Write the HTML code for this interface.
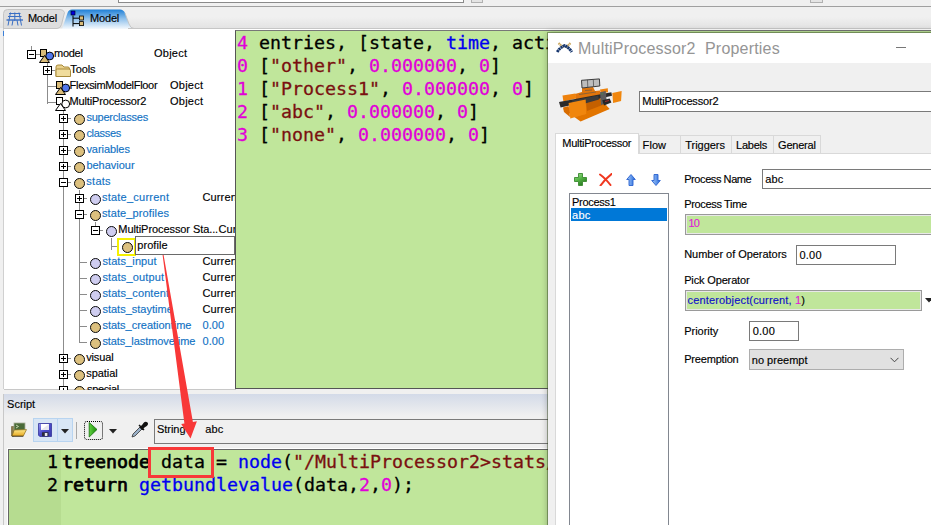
<!DOCTYPE html><html><head><meta charset="utf-8"><title>Model</title><style>
*{box-sizing:border-box;margin:0;padding:0}
html,body{width:931px;height:525px;overflow:hidden;background:#f0f0f0}
body{position:relative;font-family:"Liberation Sans",sans-serif;font-size:11px;color:#000}
.a{position:absolute}
.t{position:absolute;white-space:nowrap;line-height:16px;height:16px;font-size:11px;letter-spacing:-0.35px;-webkit-text-stroke:0.15px currentColor}
.bl{color:#1272c4}
.mono{font-family:"DejaVu Sans Mono","Liberation Mono",monospace;font-size:18.27px;line-height:23px;white-space:pre;position:absolute;-webkit-text-stroke:0.3px currentColor}
.mono b{font-weight:normal;-webkit-text-stroke:0.75px currentColor}
.mg{color:#e000d8}
.br{color:#7a1010}
.b2{color:#0000f0}
.box{position:absolute;width:9px;height:9px;border:1px solid #000;background:#fff}
.box i{position:absolute;left:1px;top:3px;width:5px;height:1px;background:#000}
.box b{position:absolute;left:3px;top:1px;width:1px;height:5px;background:#000}
.ct{position:absolute;width:11px;height:11px;border-radius:50%;border:1.4px solid #0a0a0a;background:#dcc07e}
.cl{position:absolute;width:11px;height:11px;border-radius:50%;border:1.4px solid #0a0a0a;background:#cfcdf0}
.ln{position:absolute;background:#8c8c8c}
.inp{position:absolute;background:#fff;border:1px solid #7a7a7a}
</style></head><body>
<div class="a" style="left:0;top:6px;width:931px;height:1px;background:#a0a0a0"></div>
<div class="a" style="left:118px;top:0;width:346px;height:3px;background:#fff;border:1px solid #8a8a8a;border-top:0"></div>
<div class="a" style="left:471px;top:0;width:12px;height:3px;background:#e4e4e4;border:1px solid #b0b0b0;border-top:0"></div>
<div class="a" style="left:810px;top:0;width:13px;height:3px;background:#e4e4e4;border:1px solid #b0b0b0;border-top:0"></div>
<div class="a" style="left:0;top:17px;width:931px;height:11px;background:linear-gradient(#f0f0f0,#e3e3e3)"></div>
<svg class="a" style="left:0;top:7px" width="140" height="23" viewBox="0 0 140 23">
<defs><linearGradient id="tg" x1="0" y1="0" x2="0" y2="1"><stop offset="0" stop-color="#1e7fd6"/><stop offset="0.45" stop-color="#8fc1ec"/><stop offset="1" stop-color="#ffffff"/></linearGradient></defs>
<path d="M3.5 22 V6.5 Q3.5 2.5 7.5 2.5 H60 Q63.5 2.5 64.5 5.5 L61.5 17.5 Q60.5 21.5 57 21.5 H3.5Z" fill="#dedede" stroke="#c4c4c4"/>
<path d="M62 22 L67.5 6 Q68.5 2.5 72 2.5 H120 Q123.5 2.5 125 6 L129 17 Q130.5 21.5 134 21.5 H140 V23 H62Z" fill="url(#tg)"/><path d="M125 6 L129 17 Q130.5 21.5 134 21.5 H140" fill="none" stroke="#c4c4c4" stroke-width="0.9"/>
<g stroke="#3a6fc4" stroke-width="1" fill="none"><path d="M9 6.5 H20.5 M8 9.5 H21.5 M10.5 5.5 L8 18.5 M14.8 5.5 V14 M19 5.5 L21.5 18.5 M13 13 L12 18.5 M17 13 L18 18.5"/><path d="M6.5 13 H23" stroke-width="1.4"/></g>
<g><rect x="71" y="4" width="4" height="4" fill="#0000e0" stroke="#000" stroke-width="0.6"/><path d="M73 8.5 V19.5 M73 11.2 H79 M73 16.6 H79" stroke="#000" stroke-width="1" fill="none"/><rect x="79.5" y="9" width="4" height="4" fill="#d9bb78" stroke="#000" stroke-width="0.8"/><rect x="79.5" y="14.6" width="4" height="4" fill="#d9bb78" stroke="#000" stroke-width="0.8"/></g>
</svg>
<div class="t " style="left:27.9px;top:10px;letter-spacing:-0.19px;">Model</div>
<div class="t " style="left:90.0px;top:10px;letter-spacing:-0.17px;">Model</div>
<div class="a" style="left:128px;top:28px;width:803px;height:1px;background:#c6c6c6"></div>
<div class="a" style="left:4px;top:29px;width:927px;height:2px;background:#fff"></div>
<div class="a" style="left:4px;top:29px;width:232px;height:361px;background:#fff;border-bottom:1px solid #c8c8c8"></div>
<div class="a" style="left:3px;top:29px;width:1px;height:360px;background:#d0d0d0"></div>
<div class="a" style="left:3px;top:31px;width:1px;height:5px;background:#3a7fd8"></div>
<div class="ln" style="left:31px;top:46px;width:1px;height:4px"></div>
<div class="ln" style="left:47px;top:62px;width:1px;height:42px"></div>
<div class="ln" style="left:52px;top:70px;width:3px;height:1px"></div>
<div class="ln" style="left:47px;top:86px;width:9px;height:1px"></div>
<div class="ln" style="left:47px;top:102px;width:9px;height:1px"></div>
<div class="ln" style="left:63px;top:110px;width:1px;height:280px"></div>
<div class="ln" style="left:68px;top:118px;width:3px;height:1px"></div>
<div class="ln" style="left:68px;top:134px;width:3px;height:1px"></div>
<div class="ln" style="left:68px;top:150px;width:3px;height:1px"></div>
<div class="ln" style="left:68px;top:166px;width:3px;height:1px"></div>
<div class="ln" style="left:68px;top:182px;width:3px;height:1px"></div>
<div class="ln" style="left:68px;top:358px;width:3px;height:1px"></div>
<div class="ln" style="left:68px;top:374px;width:3px;height:1px"></div>
<div class="ln" style="left:68px;top:390px;width:3px;height:1px"></div>
<div class="ln" style="left:79px;top:190px;width:1px;height:152px"></div>
<div class="ln" style="left:84px;top:198px;width:3px;height:1px"></div>
<div class="ln" style="left:84px;top:214px;width:3px;height:1px"></div>
<div class="ln" style="left:79px;top:262px;width:8px;height:1px"></div>
<div class="ln" style="left:79px;top:278px;width:8px;height:1px"></div>
<div class="ln" style="left:79px;top:294px;width:8px;height:1px"></div>
<div class="ln" style="left:79px;top:310px;width:8px;height:1px"></div>
<div class="ln" style="left:79px;top:326px;width:8px;height:1px"></div>
<div class="ln" style="left:79px;top:342px;width:8px;height:1px"></div>
<div class="ln" style="left:95px;top:222px;width:1px;height:4px"></div>
<div class="ln" style="left:100px;top:230px;width:3px;height:1px"></div>
<div class="ln" style="left:111px;top:238px;width:1px;height:12px"></div>
<div class="ln" style="left:111px;top:246px;width:6px;height:1px"></div>
<div class="box" style="left:27px;top:50px"><i></i></div>
<div class="ln" style="left:36px;top:54px;width:4px;height:1px"></div>
<svg class="a" style="left:39px;top:49px" width="16" height="15" viewBox="0 0 16 15"><rect x="1.5" y="0.5" width="6" height="7" fill="#d9bb78" stroke="#000"/><circle cx="10.7" cy="7" r="3.9" fill="#5278ea" stroke="#000"/><path d="M5.5 6.5 L10.5 13.5 H0.5Z" fill="#d9bb78" stroke="#000"/></svg>
<div class="t " style="left:54.1px;top:45px;letter-spacing:-0.29px;">model</div>
<div class="t " style="left:154.0px;top:45px;letter-spacing:0.25px;">Object</div>
<div class="box" style="left:43px;top:66px"><i></i><b></b></div>
<svg class="a" style="left:55px;top:64px" width="17" height="14" viewBox="0 0 17 14"><path d="M1 3 Q1 1 3 1 H7 L9 3 H13 Q14.5 3 14.5 5 V12.5 H1Z" fill="#e8cf8a" stroke="#a88a3a"/><path d="M1 12.5 V6 Q1 5 2.5 5 H14 Q15.5 5 15.5 6.5 V12.5Z" fill="#f0dc9c" stroke="#a88a3a"/></svg>
<div class="t " style="left:70.3px;top:61px;letter-spacing:-0.1px;">Tools</div>
<svg class="a" style="left:55px;top:81px" width="16" height="15" viewBox="0 0 16 15"><rect x="1.5" y="0.5" width="6" height="7" fill="#d9bb78" stroke="#000"/><circle cx="10.7" cy="7" r="3.9" fill="#5278ea" stroke="#000"/><path d="M5.5 6.5 L10.5 13.5 H0.5Z" fill="#d9bb78" stroke="#000"/></svg>
<div class="t " style="left:69.6px;top:77px;letter-spacing:-0.31px;">FlexsimModelFloor</div>
<div class="t " style="left:170.0px;top:77px;letter-spacing:0.25px;">Object</div>
<svg class="a" style="left:55px;top:97px" width="16" height="15" viewBox="0 0 16 15"><rect x="1.5" y="0.5" width="6" height="7" fill="#fff" stroke="#000"/><circle cx="10.7" cy="7" r="3.9" fill="#fff" stroke="#000"/><path d="M5.5 6.5 L10.5 13.5 H0.5Z" fill="#fff" stroke="#000"/></svg>
<div class="t " style="left:69.6px;top:93px;letter-spacing:-0.15px;">MultiProcessor2</div>
<div class="t " style="left:170.0px;top:93px;letter-spacing:0.25px;">Object</div>
<div class="box" style="left:59px;top:114px"><i></i><b></b></div>
<div class="ct" style="left:74px;top:114px"></div>
<div class="t bl" style="left:86.4px;top:109px;letter-spacing:-0.22px;">superclasses</div>
<div class="box" style="left:59px;top:130px"><i></i><b></b></div>
<div class="ct" style="left:74px;top:130px"></div>
<div class="t bl" style="left:86.4px;top:125px;letter-spacing:-0.31px;">classes</div>
<div class="box" style="left:59px;top:146px"><i></i><b></b></div>
<div class="ct" style="left:74px;top:146px"></div>
<div class="t bl" style="left:86.4px;top:141px;letter-spacing:-0.06px;">variables</div>
<div class="box" style="left:59px;top:162px"><i></i><b></b></div>
<div class="ct" style="left:74px;top:162px"></div>
<div class="t bl" style="left:86.4px;top:157px;letter-spacing:-0.02px;">behaviour</div>
<div class="box" style="left:59px;top:178px"><i></i></div>
<div class="ct" style="left:74px;top:178px"></div>
<div class="t bl" style="left:86.3px;top:173px;letter-spacing:0.27px;">stats</div>
<div class="box" style="left:75px;top:194px"><i></i><b></b></div>
<div class="cl" style="left:90px;top:194px"></div>
<div class="t bl" style="left:101.9px;top:189px;letter-spacing:0.24px;">state_current</div>
<div class="t " style="left:202.4px;top:189px;letter-spacing:0.16px;">Curren</div>
<div class="box" style="left:75px;top:210px"><i></i></div>
<div class="ct" style="left:90px;top:210px"></div>
<div class="t bl" style="left:101.9px;top:205px;letter-spacing:0.12px;">state_profiles</div>
<div class="box" style="left:91px;top:226px"><i></i></div>
<div class="cl" style="left:106px;top:226px"></div>
<div class="t " style="left:118.3px;top:221px;letter-spacing:-0.08px;">MultiProcessor Sta...</div>
<div class="t " style="left:218.4px;top:221px;letter-spacing:0.16px;">Curren</div>
<div class="a" style="left:117px;top:238px;width:19px;height:18px;border:2px solid #f4f000;background:#fff"></div>
<div class="ct" style="left:122px;top:242px"></div>
<div class="inp" style="left:135px;top:236px;width:100px;height:19px;border-color:#6a6a6a"></div>
<div class="t " style="left:137.2px;top:237px;letter-spacing:0.08px;">profile</div>
<div class="cl" style="left:90px;top:258px"></div>
<div class="t bl" style="left:102.4px;top:253px;letter-spacing:0.1px;">stats_input</div>
<div class="t " style="left:202.4px;top:253px;letter-spacing:0.16px;">Curren</div>
<div class="cl" style="left:90px;top:274px"></div>
<div class="t bl" style="left:102.4px;top:269px;letter-spacing:0.16px;">stats_output</div>
<div class="t " style="left:202.4px;top:269px;letter-spacing:0.16px;">Curren</div>
<div class="cl" style="left:90px;top:290px"></div>
<div class="t bl" style="left:102.4px;top:285px;letter-spacing:0.1px;">stats_content</div>
<div class="t " style="left:202.4px;top:285px;letter-spacing:0.16px;">Curren</div>
<div class="cl" style="left:90px;top:306px"></div>
<div class="t bl" style="left:102.4px;top:301px;letter-spacing:0.01px;">stats_staytime</div>
<div class="t " style="left:202.4px;top:301px;letter-spacing:0.16px;">Curren</div>
<div class="ct" style="left:90px;top:322px"></div>
<div class="t bl" style="left:102.4px;top:317px;letter-spacing:-0.01px;">stats_creationtime</div>
<div class="t bl" style="left:202.4px;top:317px;letter-spacing:0.12px;">0.00</div>
<div class="ct" style="left:90px;top:338px"></div>
<div class="t bl" style="left:102.4px;top:333px;letter-spacing:-0.07px;">stats_lastmovetime</div>
<div class="t bl" style="left:202.4px;top:333px;letter-spacing:0.12px;">0.00</div>
<div class="box" style="left:59px;top:354px"><i></i><b></b></div>
<div class="ct" style="left:74px;top:354px"></div>
<div class="t " style="left:86.2px;top:349px;letter-spacing:-0.14px;">visual</div>
<div class="box" style="left:59px;top:370px"><i></i><b></b></div>
<div class="ct" style="left:74px;top:370px"></div>
<div class="t " style="left:86.2px;top:365px;letter-spacing:-0.03px;">spatial</div>
<div class="box" style="left:59px;top:386px"><i></i><b></b></div>
<div class="ct" style="left:74px;top:386px"></div>
<div class="t " style="left:87px;top:381px">special</div>
<div class="a" style="left:0;top:390px;width:548px;height:135px;background:#f0f0f0"></div>
<div class="a" style="left:235px;top:30px;width:700px;height:359px;background:#c0e69b;border-left:1px solid #555;border-top:1px solid #777;border-bottom:1px solid #555"></div>
<div class="mono" style="left:237px;top:31px"><span class="mg">4</span> entries, [state, <span class="b2">time</span>, acti</div>
<div class="mono" style="left:237px;top:54px"><span class="mg">0</span> [<span class="br">"other"</span>, <span class="mg">0.000000</span>, <span class="mg">0</span>]</div>
<div class="mono" style="left:237px;top:77px"><span class="mg">1</span> [<span class="br">"Process1"</span>, <span class="mg">0.000000</span>, <span class="mg">0</span>]</div>
<div class="mono" style="left:237px;top:100px"><span class="mg">2</span> [<span class="br">"abc"</span>, <span class="mg">0.000000</span>, <span class="mg">0</span>]</div>
<div class="mono" style="left:237px;top:123px"><span class="mg">3</span> [<span class="br">"none"</span>, <span class="mg">0.000000</span>, <span class="mg">0</span>]</div>
<div class="a" style="left:4px;top:394px;width:544px;height:22px;background:linear-gradient(#d3dae8,#f0f0f0)"></div>
<div class="a" style="left:3px;top:394px;width:1px;height:131px;background:#c8c8c8"></div>
<div class="t " style="left:7.1px;top:396px;letter-spacing:-0.02px;">Script</div>
<div class="a" style="left:33px;top:418px;width:40px;height:24px;background:#d8e6f5;border:1px solid #b8d4f0"></div>
<div class="a" style="left:57px;top:418px;width:1px;height:24px;background:#b8d4f0"></div>
<svg class="a" style="left:10px;top:421px" width="18" height="17" viewBox="0 0 18 17"><defs><linearGradient id="fg" x1="0" y1="0" x2="0" y2="1"><stop offset="0" stop-color="#fde98a"/><stop offset="1" stop-color="#e8a820"/></linearGradient><linearGradient id="sg" x1="0" y1="0" x2="1" y2="1"><stop offset="0" stop-color="#9a9af0"/><stop offset="0.5" stop-color="#4a4ac8"/><stop offset="1" stop-color="#3a3aa8"/></linearGradient></defs><path d="M1.5 5.5 H4 V15 H1.5Z" fill="#8a7a48" stroke="#6a5a30" stroke-width="0.6"/><rect x="4" y="2" width="11" height="8" fill="#4a6a38" stroke="#a8b098" stroke-width="0.8"/><path d="M6 4 L8.5 5.5 L6 7" fill="none" stroke="#cfe0b8" stroke-width="0.9"/><path d="M4.2 9 L16.5 8.6 L13.3 15 H2Z" fill="url(#fg)" stroke="#8a6a18" stroke-width="0.7"/><path d="M2 15.3 H13.3" stroke="#3a3020" stroke-width="0.8"/></svg>
<svg class="a" style="left:38px;top:423px" width="14" height="14" viewBox="0 0 14 14"><path d="M0.5 0.5 H13.5 V13.5 H1.8 L0.5 12.2Z" fill="url(#sg)" stroke="#34349a" stroke-width="0.8"/><rect x="3" y="1" width="8" height="6" fill="#fff"/><path d="M11 1 V7 H3Z" fill="#dcdce8" opacity="0.7"/><rect x="4" y="9.3" width="6.5" height="4" fill="#2a2a3a"/><rect x="6.8" y="10" width="2.6" height="3" fill="#e8e8f0"/></svg>
<svg class="a" style="left:61px;top:429px" width="8" height="5" viewBox="0 0 8 5"><path d="M0 0 H8 L4 4.5Z" fill="#222"/></svg>
<div class="a" style="left:76px;top:422px;width:1px;height:17px;background:#a8a8a8"></div>
<div class="a" style="left:84px;top:421px;width:19px;height:19px;border:1px dotted #000;border-radius:3px"></div>
<svg class="a" style="left:88px;top:421px" width="12" height="18" viewBox="0 0 12 18"><defs><linearGradient id="pg" x1="0" y1="0" x2="1" y2="0"><stop offset="0" stop-color="#60d040"/><stop offset="1" stop-color="#188808"/></linearGradient></defs><path d="M1.2 1.5 L9 8.5 L1.2 16Z" fill="url(#pg)" stroke="#107008" stroke-width="0.8"/></svg>
<svg class="a" style="left:109px;top:429px" width="8" height="5" viewBox="0 0 8 5"><path d="M0 0 H8 L4 4.5Z" fill="#222"/></svg>
<svg class="a" style="left:131px;top:421px" width="17" height="17" viewBox="0 0 17 17"><path d="M1 16 L2 13 L9 6 L11 8 L4 15Z" fill="#9ab0c8" stroke="#333" stroke-width="0.8"/><path d="M8 4 L13 9 M9.5 6.5 L12 4 Q14 0.5 16 2 Q17 4 13.5 5.5 L11 8Z" fill="#111" stroke="#111" stroke-width="1.5"/></svg>
<div class="inp" style="left:154px;top:419px;width:400px;height:25px;background:#f0f0f0"></div>
<div class="t " style="left:157.0px;top:421px;letter-spacing:-0.04px;">String</div>
<div class="t " style="left:205.2px;top:421px;letter-spacing:0.16px;">abc</div>
<div class="a" style="left:7px;top:448px;width:545px;height:80px;background:#fff"></div>
<div class="a" style="left:8px;top:449px;width:545px;height:80px;background:#666"></div>
<div class="a" style="left:9px;top:450px;width:545px;height:80px;background:#c0e69b"></div>
<div class="a" style="left:9px;top:450px;width:52px;height:80px;background:#b6dc90"></div>
<div class="mono" style="left:47px;top:450px">1</div>
<div class="mono" style="left:47px;top:473px">2</div>
<div class="mono" style="left:62px;top:450px"><b>treenode</b> data = <span class="b2">node</span>(<span class="br">"/MultiProcessor2&gt;stats/</span></div>
<div class="mono" style="left:62px;top:473px"><b>return</b> <span class="b2">getbundlevalue</span>(data,<span class="mg">2</span>,<span class="mg">0</span>);</div>
<div class="a" style="left:148px;top:447px;width:66px;height:31px;border:3px solid #f83838"></div>
<svg class="a" style="left:150px;top:250px" width="60" height="195" viewBox="150 250 60 195"><path d="M162.6 255 L184.4 423.6 L181.2 424 L190.5 438.6 L196.9 421.2 L192.9 421.9 L163.6 255Z" fill="#f83838"/></svg>
<div class="a" style="left:548px;top:33px;width:390px;height:500px;background:#f0f0f0;outline:1px solid rgba(50,70,30,.45);box-shadow:0 0 7px rgba(0,0,0,.32)"></div>
<div class="a" style="left:548px;top:33px;width:383px;height:30px;background:#fff"></div>
<svg class="a" style="left:556px;top:42px" width="17" height="12" viewBox="0 0 17 12"><path d="M2.5 1.2 L7.5 5.5 M14.5 1.2 L9.5 5.5" stroke="#c9a45a" stroke-width="2.2" stroke-dasharray="1.4 0.5"/><path d="M1.2 10 Q4 5.5 8.5 3.6 Q13 5.5 15.8 10" fill="none" stroke="#15356d" stroke-width="2.9" stroke-dasharray="2.2 0.45"/></svg>
<div class="a" style="left:578px;top:39px;font-size:16px;line-height:20px;color:#959595;white-space:pre;letter-spacing:0.2px">MultiProcessor2  Properties</div>
<div class="a" style="left:896px;top:47px;width:10px;height:1px;background:#777"></div>
<svg class="a" style="left:552px;top:70px" width="80" height="60" viewBox="0 0 80 60">
<defs><filter id="bl" x="-10%" y="-10%" width="120%" height="120%"><feGaussianBlur stdDeviation="0.45"/></filter></defs>
<g filter="url(#bl)">
<path d="M11.4 38.9 L48 28.6 L57.7 38.9 L28.6 51.4Z" fill="#e27404"/><path d="M34 31 L48 27.5 L50.5 35 L35 41Z" fill="#c46004"/>
<path d="M23 24 L30 22 L30 18.3 L41 17 L43 21 L48 20.5 L49 28 L24 32Z" fill="#e07408"/>
<path d="M29.5 10.3 L47.4 8.9 L47.8 16 L30 18Z" fill="#bdbdbd" stroke="#2a2a2a" stroke-width="0.9"/>
<path d="M35.5 9.9 L35.8 17.3 M41.3 9.4 L41.6 16.7" stroke="#444" stroke-width="0.7"/>
<path d="M10.5 25.4 L23.4 23.4 L24.2 28.6 L11.4 31.4Z" fill="#ee820c"/>
<path d="M48 19.4 L55.8 18.3 L56 22.3 L48.6 22.9Z" fill="#ee820c"/>
<path d="M7 32 L59.4 22.3 L60 25.7 L8.6 37.6Z" fill="#2a2a2a"/>
<path d="M20 30.5 L46 25.5 L47 29.5 L33 33.5 L21 34Z" fill="#3a3a3a"/>
<path d="M60.3 22.9 L69.7 21.1 L69.1 30.9 L61.1 33.1Z" fill="#f0860e"/>
<path d="M27 24.5 L44 22 M33 20.5 L40 20" stroke="#555" stroke-width="0.6"/>
<path d="M16.6 33.1 L33.7 29.5 L34.3 44 L18.3 48.6Z" fill="#f0860e"/>
<path d="M11 37.5 L16.6 36 L18 47 L12 42Z" fill="#d86c04"/>
<path d="M48 22.3 L53.7 21.1 L54.9 33.1 L49.1 34.9Z" fill="#5c5c5c"/>
<path d="M50.3 30.3 L57.7 28.6 L59.4 32.6 L52 35.4Z" fill="#262626"/>
<path d="M53 31.5 L57 30.5" stroke="#c03030" stroke-width="0.8"/>
<path d="M49.5 24 L51 23.7" stroke="#40a040" stroke-width="0.8"/>
</g>
</svg>
<div class="inp" style="left:639px;top:91px;width:300px;height:21px"></div>
<div class="t " style="left:642.2px;top:93px;letter-spacing:-0.18px;">MultiProcessor2</div>
<div class="a" style="left:555px;top:153px;width:380px;height:380px;background:#fff;border:1px solid #d9d9d9"></div>
<div class="a" style="left:639px;top:135px;width:42px;height:19px;background:#f0f0f0;border:1px solid #d9d9d9"></div>
<div class="t " style="left:642.6px;top:137px;letter-spacing:0.07px;">Flow</div>
<div class="a" style="left:680px;top:135px;width:52px;height:19px;background:#f0f0f0;border:1px solid #d9d9d9"></div>
<div class="t " style="left:685.3px;top:137px;letter-spacing:-0.04px;">Triggers</div>
<div class="a" style="left:731px;top:135px;width:44px;height:19px;background:#f0f0f0;border:1px solid #d9d9d9"></div>
<div class="t " style="left:736.1px;top:137px;letter-spacing:-0.25px;">Labels</div>
<div class="a" style="left:773px;top:135px;width:48px;height:19px;background:#f0f0f0;border:1px solid #d9d9d9"></div>
<div class="t " style="left:778.1px;top:137px;letter-spacing:-0.23px;">General</div>
<div class="a" style="left:555px;top:133px;width:84px;height:21px;background:#fff;border:1px solid #d9d9d9;border-bottom:0"></div>
<div class="t " style="left:562.3px;top:135px;letter-spacing:-0.27px;">MultiProcessor</div>
<svg class="a" style="left:574px;top:173px" width="13" height="13" viewBox="0 0 13 13"><defs><linearGradient id="gg" x1="0" y1="0" x2="0.6" y2="1"><stop offset="0" stop-color="#a8e098"/><stop offset="0.5" stop-color="#58b848"/><stop offset="1" stop-color="#2a7a22"/></linearGradient><linearGradient id="ag" x1="0" y1="0" x2="1" y2="0"><stop offset="0" stop-color="#a8ccf8"/><stop offset="1" stop-color="#2468dc"/></linearGradient></defs><path d="M4.5 0.5 H8.5 V4.5 H12.5 V8.5 H8.5 V12.5 H4.5 V8.5 H0.5 V4.5 H4.5Z" fill="url(#gg)" stroke="#3a8a30" stroke-width="0.9"/></svg>
<svg class="a" style="left:599px;top:173px" width="13" height="13" viewBox="0 0 13 13"><path d="M1 1.5 Q6 5 11.5 12 M12.5 1 Q6 6 1.5 12.5" stroke="#f03820" stroke-width="2" fill="none" stroke-linecap="round"/></svg>
<svg class="a" style="left:626px;top:174px" width="10" height="12" viewBox="0 0 10 12"><path d="M5 0.5 L9.3 5.5 H7 V11.5 H3 V5.5 H0.7Z" fill="url(#ag)" stroke="#2a62d0" stroke-width="0.9"/></svg>
<svg class="a" style="left:651px;top:174px" width="10" height="12" viewBox="0 0 10 12"><path d="M5 11.5 L9.3 6.5 H7 V0.5 H3 V6.5 H0.7Z" fill="url(#ag)" stroke="#2a62d0" stroke-width="0.9"/></svg>
<div class="inp" style="left:569px;top:193px;width:100px;height:340px;border-color:#828790"></div>
<div class="t " style="left:572.1px;top:195px;letter-spacing:-0.31px;line-height:14px">Process1</div>
<div class="a" style="left:571px;top:208px;width:96px;height:13px;background:#0078d7"></div>
<div class="t " style="left:572.1px;top:208px;letter-spacing:0.22px;line-height:14px;color:#fff">abc</div>
<div class="t " style="left:684.2px;top:171px;letter-spacing:-0.42px;">Process Name</div>
<div class="inp" style="left:762px;top:169px;width:180px;height:20px"></div>
<div class="t " style="left:765.3px;top:171px;letter-spacing:0.06px;">abc</div>
<div class="t " style="left:684.2px;top:196px;letter-spacing:-0.34px;">Process Time</div>
<div class="a" style="left:685px;top:214px;width:260px;height:21px;background:#c0e69b;border:1px solid #9a9a9a;box-shadow:inset 1px 1px 0 #e8e8e8, inset -1px -1px 0 #e8e8e8"></div>
<div class="t " style="left:688.5px;top:215px;letter-spacing:-0.77px;"><span style="color:#e018d8">10</span></div>
<div class="t " style="left:684.2px;top:246px;letter-spacing:-0.04px;">Number of Operators</div>
<div class="inp" style="left:796px;top:245px;width:100px;height:20px"></div>
<div class="t " style="left:799.4px;top:247px;letter-spacing:0.27px;">0.00</div>
<div class="t " style="left:684.2px;top:272px;letter-spacing:-0.15px;">Pick Operator</div>
<div class="a" style="left:685px;top:290px;width:237px;height:21px;background:#c0e69b;border:1px solid #9a9a9a;box-shadow:inset 1px 1px 0 #e8e8e8, inset -1px -1px 0 #e8e8e8"></div>
<div class="t " style="left:687.5px;top:292px;letter-spacing:0.16px;"><span style="color:#1010c8">centerobject(current, </span><span style="color:#e018d8">1</span>)</div>
<svg class="a" style="left:925px;top:298px" width="8" height="5" viewBox="0 0 8 5"><path d="M0 0 H8 L4 4.5Z" fill="#222"/></svg>
<div class="t " style="left:684.2px;top:323px;letter-spacing:-0.02px;">Priority</div>
<div class="inp" style="left:749px;top:321px;width:50px;height:20px"></div>
<div class="t " style="left:752.7px;top:323px;letter-spacing:0.25px;">0.00</div>
<div class="t " style="left:684.2px;top:351px;letter-spacing:-0.19px;">Preemption</div>
<div class="a" style="left:749px;top:349px;width:155px;height:21px;background:#e1e1e1;border:1px solid #adadad"></div>
<div class="t " style="left:751.8px;top:352px;letter-spacing:0.01px;">no preempt</div>
<svg class="a" style="left:890px;top:357px" width="9" height="6" viewBox="0 0 9 6"><path d="M0.5 0.8 L4.5 4.8 L8.5 0.8" fill="none" stroke="#444" stroke-width="1"/></svg>
</body></html>
